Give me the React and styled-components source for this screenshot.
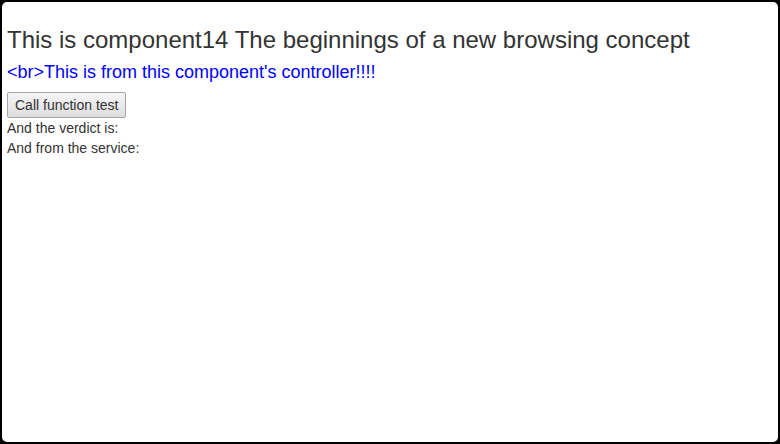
import React from 'react';
import styled, { createGlobalStyle } from 'styled-components';

const GlobalStyle = createGlobalStyle`
    html, body {
        margin: 0;
        padding: 0;
        background-color: #000;
    }
    * {
        box-sizing: border-box;
    }
`;

export const Frame = styled.div`
    height: 444px;
    width: 780px;
    background-color: #FFF;
    border: 2px solid #000;
    border-radius: 7px;
    padding: 5px 5px 0;
    overflow: hidden;
    font-family: 'Liberation Sans', Arial, sans-serif;
    font-size: 14px;
    line-height: 20px;
    color: #333;
    display: flex;
    flex-direction: column;
    align-items: flex-start;
`;

export const Title = styled.h3`
    font-size: 24px;
    font-weight: 500;
    line-height: 1.1;
    margin: 20px 0 0;
`;

export const ControllerMsg = styled.div`
    font-size: 18px;
    line-height: 1.1;
    color: #0000FF;
    margin: 10px 0 0;
`;

export const Button = styled.button`
    margin-top: 9px;
    height: 26px;
    padding: 0 6px 0 7px;
    font-family: 'Liberation Sans', Arial, sans-serif;
    font-size: 14px;
    color: #333;
    background: linear-gradient(#F6F6F6, #DDDDDD);
    border: 1px solid #A6A6A6;
    border-radius: 2px;
`;

export const Line = styled.div`
    line-height: 20px;
`;

export default function App() {
    return (
        <>
            <GlobalStyle />
            <Frame>
                <Title>This is component14 The beginnings of a new browsing concept</Title>
                <ControllerMsg>{"<br>This is from this component's controller!!!!"}</ControllerMsg>
                <Button type="button">Call function test</Button>
                <Line>And the verdict is:</Line>
                <Line>And from the service:</Line>
            </Frame>
        </>
    );
}
